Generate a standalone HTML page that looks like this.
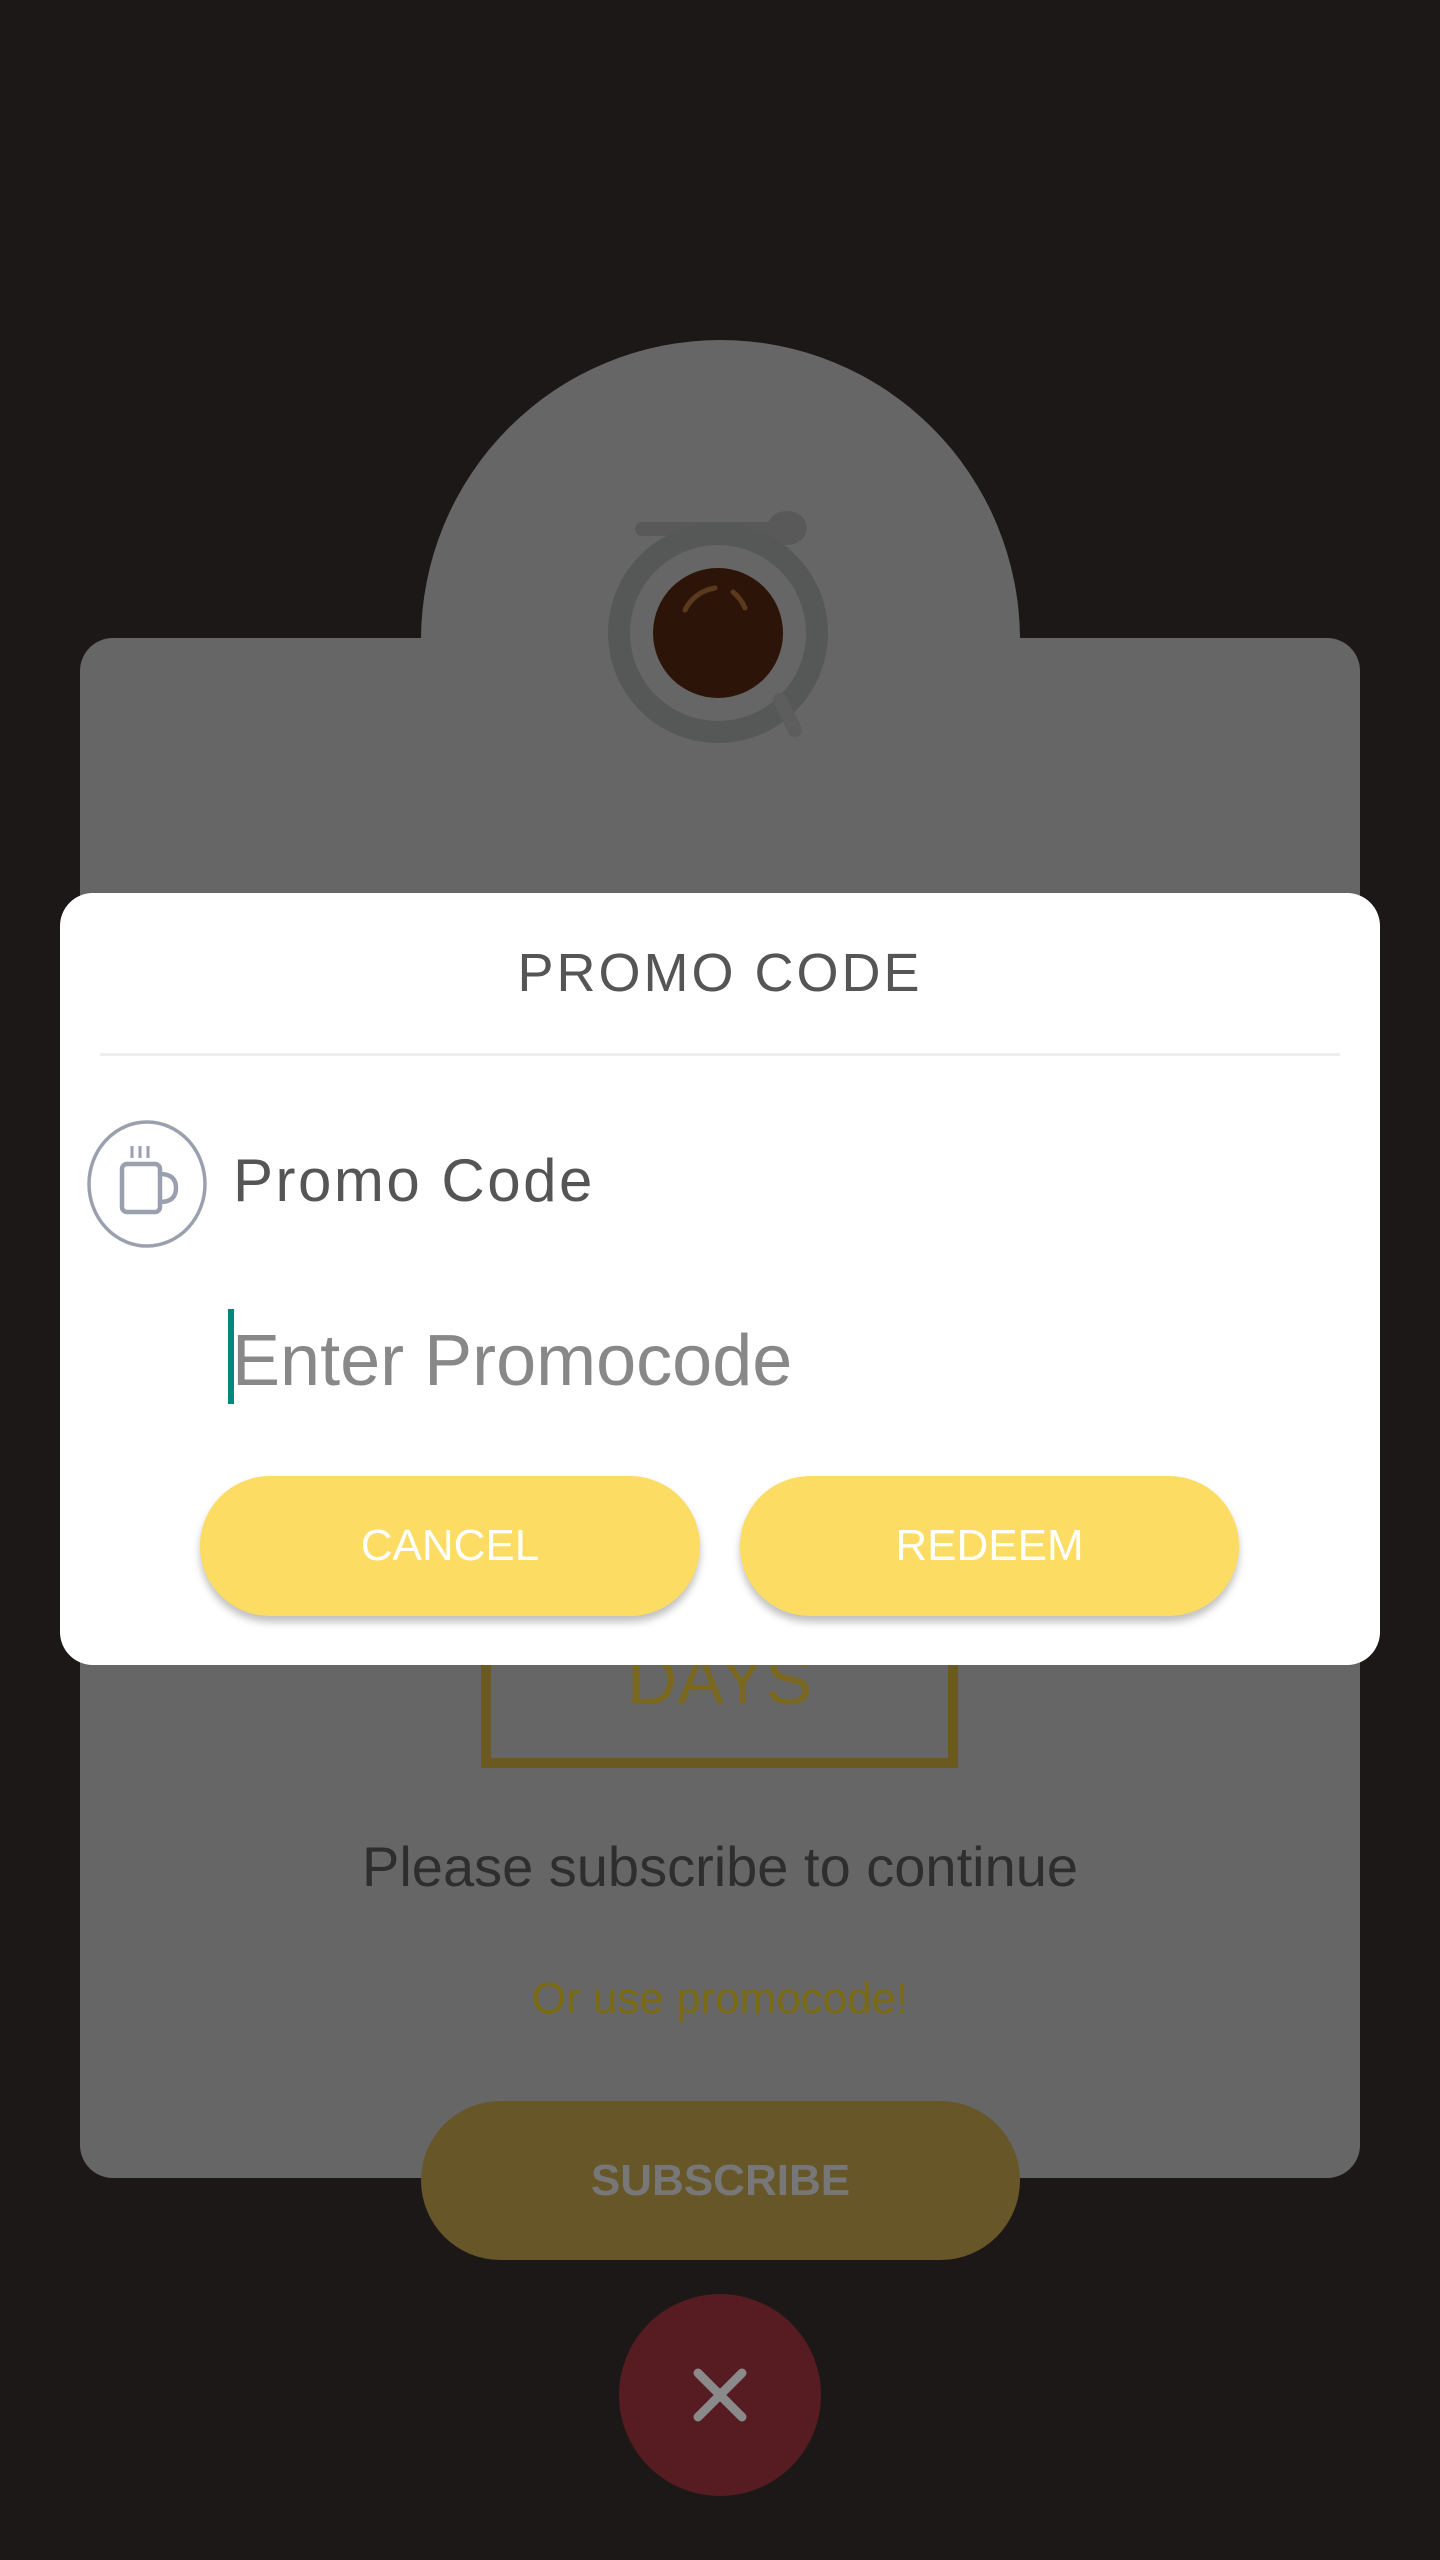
<!DOCTYPE html>
<html><head><meta charset="utf-8"><style>
*{margin:0;padding:0;box-sizing:border-box}
body{width:1440px;height:2560px;background:#1b1817;position:relative;overflow:hidden;font-family:"Liberation Sans",sans-serif}
.abs{position:absolute}
</style></head><body>
<div class="abs" style="left:421px;top:340px;width:599px;height:600px;border-radius:50%;background:#666"></div>
<div class="abs" style="left:80px;top:638px;width:1280px;height:1540px;border-radius:33px;background:#666"></div>
<svg class="abs" style="left:590px;top:500px" width="260" height="260" viewBox="0 0 260 260">
<rect x="45" y="22" width="150" height="14" rx="7" fill="#595959"/>
<ellipse cx="197" cy="28" rx="20" ry="17" fill="#595959"/>
<circle cx="128" cy="133" r="110" fill="#565757"/>
<circle cx="128" cy="133" r="88" fill="#666"/>
<circle cx="128" cy="133" r="65" fill="#2c1508"/>
<path d="M95 110 A40 40 0 0 1 125 88" stroke="#5a3a1c" stroke-width="5" fill="none" stroke-linecap="round"/>
<path d="M143 92 A40 40 0 0 1 155 108" stroke="#5a3a1c" stroke-width="5" fill="none" stroke-linecap="round"/>
<path d="M190 200 L205 230" stroke="#5d5d5d" stroke-width="14" stroke-linecap="round"/>
</svg>
<div class="abs" style="left:481px;top:1600px;width:477px;height:168px;border:10px solid #6b5a1f;border-top:none"></div>
<div class="abs" style="left:481px;top:1640px;width:477px;text-align:center;font-size:70px;color:#7a6820">DAYS</div>
<div class="abs" style="left:0;top:1834px;width:1440px;text-align:center;font-size:56px;color:#2e2e2e">Please subscribe to continue</div>
<div class="abs" style="left:0;top:1974px;width:1440px;text-align:center;font-size:44px;color:#7a6a10">Or use promocode!</div>
<div class="abs" style="left:421px;top:2101px;width:599px;height:159px;border-radius:80px;background:#665628;color:#777;font-size:44px;font-weight:bold;text-align:center;line-height:159px">SUBSCRIBE</div>
<div class="abs" style="left:619px;top:2294px;width:202px;height:202px;border-radius:50%;background:#561c21"></div>
<svg class="abs" style="left:690px;top:2365px" width="60" height="60"><path d="M8 8L52 52M52 8L8 52" stroke="#8a8a8a" stroke-width="9" stroke-linecap="round"/></svg>

<div class="abs" style="left:60px;top:893px;width:1320px;height:772px;border-radius:33px;background:#fff"></div>
<div class="abs" style="left:60px;top:942px;width:1320px;text-align:center;font-size:54px;color:#555;letter-spacing:3px">PROMO CODE</div>
<div class="abs" style="left:100px;top:1053px;width:1240px;height:3px;background:#eee"></div>
<svg class="abs" style="left:86px;top:1120px" width="124" height="128" viewBox="0 0 124 128">
<ellipse cx="61" cy="64" rx="58" ry="62" fill="none" stroke="#9aa0ae" stroke-width="3.5"/>
<rect x="36" y="44" width="38" height="48" rx="5" fill="none" stroke="#9aa0ae" stroke-width="4.5"/>
<path d="M74 54 q16 0 16 14 q0 14 -16 14" fill="none" stroke="#9aa0ae" stroke-width="4.5"/>
<path d="M46 26v12M54 26v12M62 26v12" stroke="#9aa0ae" stroke-width="3"/>
</svg>
<div class="abs" style="left:233px;top:1146px;font-size:60px;color:#555;letter-spacing:2.5px">Promo Code</div>
<div class="abs" style="left:228px;top:1309px;width:6px;height:95px;background:#00897b"></div>
<div class="abs" style="left:232px;top:1320px;font-size:72px;color:#888">Enter Promocode</div>
<div class="abs" style="left:200px;top:1476px;width:500px;height:140px;border-radius:70px;background:#fcdc62;box-shadow:0 6px 8px rgba(0,0,0,.25);color:#fff;font-size:44px;text-align:center;line-height:140px">CANCEL</div>
<div class="abs" style="left:740px;top:1476px;width:499px;height:140px;border-radius:70px;background:#fcdc62;box-shadow:0 6px 8px rgba(0,0,0,.25);color:#fff;font-size:44px;text-align:center;line-height:140px">REDEEM</div>
</body></html>
